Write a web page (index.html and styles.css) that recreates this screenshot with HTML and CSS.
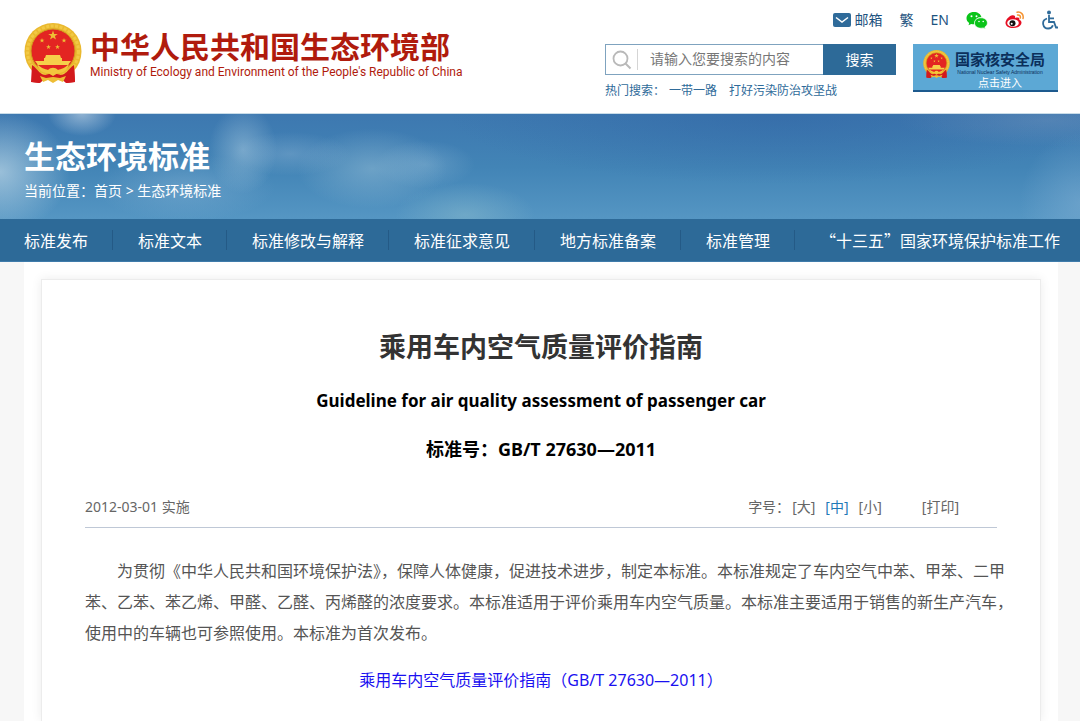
FILE: index.html
```html
<!DOCTYPE html>
<html lang="zh-CN">
<head>
<meta charset="utf-8">
<meta name="viewport" content="width=device-width, initial-scale=1">
<title>乘用车内空气质量评价指南</title>
<link rel="stylesheet" href="styles.css">
</head>
<body>
<svg class="sprite" width="0" height="0" aria-hidden="true">
  <defs>
    <path id="star" d="M0-5 1.2-1.6 4.8-1.5 1.9.6 2.9 4 0 2-2.9 4-1.9.6-4.8-1.5-1.2-1.6z"/>
    <symbol id="emblem" viewBox="0 0 58 62">
      <path d="M8 43h42l1 17-9 1-5-5H21l-5 5-8-1z" fill="#d3191c"/>
      <circle cx="29" cy="29.500" r="28.500" fill="#eab92f"/>
      <circle cx="29" cy="29.500" r="25.500" fill="none" stroke="#f2c944" stroke-width="3" stroke-dasharray="3 1.500"/>
      <circle cx="29" cy="29" r="22" fill="#e32522" stroke="#d29c1e"/>
      <g fill="#eebd35">
        <use href="#star" transform="translate(29 13.500)"/>
        <use href="#star" transform="translate(18 18.500) scale(.52)"/>
        <use href="#star" transform="translate(40 18.500) scale(.52)"/>
        <use href="#star" transform="translate(24.500 25) scale(.52)"/>
        <use href="#star" transform="translate(33.500 25) scale(.52)"/>
      </g>
      <path d="M22 33h14l1 3H21zM20 36h18v3H20zM11 39h36l-3 4H14z" fill="#f6cf4a"/>
      <path d="M8 43c5 3 7 9 13 10l8-2 8 2c6-1 8-7 13-10l1 17-8 1-6-4H21l-6 4-8-1z" fill="#d3191c"/>
      <path d="M13 42c4 4 8 5 11 6 3-3 7-3 10 0 3-1 7-2 11-6-2 7-6 9-11 9l-5 3-5-3c-5 0-9-2-11-9z" fill="#f3c63d"/>
      <path d="M16 54l6 2c3 0 4-1 7-1s4 1 7 1l6-2-3 6-5-2-5 3-5-3-5 2z" fill="#eebd35"/>
    </symbol>
  </defs>
</svg>

<header class="header">
  <a class="logo" href="#">
    <svg class="logo-emblem" aria-hidden="true"><use href="#emblem"/></svg>
    <span class="logo-text">
      <span class="logo-name">中华人民共和国生态环境部</span>
      <span class="logo-en">Ministry of Ecology and Environment of the People's Republic of China</span>
    </span>
  </a>
  <div class="tools">
    <div class="links">
      <a class="mail" href="#">
        <svg width="18" height="14" viewBox="0 0 18 14" aria-hidden="true"><rect width="18" height="14" rx="2" fill="#2f6b9a"/><path d="M3 4.500l6 4.500 6-4.500" fill="none" stroke="#fff" stroke-width="1.500"/></svg>
        <span>邮箱</span>
      </a>
      <a href="#">繁</a>
      <a href="#">EN</a>
      <a href="#" aria-label="微信">
        <svg width="22" height="18" viewBox="0 0 22 18"><path d="M8 1C3.600 1 .5 3.700.5 7.200c0 2 1 3.600 2.700 4.700l-.7 2.300 2.700-1.300c1 .3 2 .4 3.100.4C8 9 11 6 15.400 6 14.700 3 11.700 1 8 1z" fill="#0ac419"/><path d="M15 6.800c-3.700 0-6.500 2.300-6.500 5.200s2.800 5.200 6.500 5.200c.8 0 1.500-.1 2.200-.3l2.100 1-.5-1.900c1.600-1 2.600-2.400 2.600-4 0-2.900-2.800-5.200-6.400-5.200z" fill="#0ac419" stroke="#fff" stroke-width=".6"/><g fill="#fff"><circle cx="5.500" cy="5.200" r="1"/><circle cx="10.500" cy="5.200" r="1"/><circle cx="13" cy="10.500" r=".8"/><circle cx="17.200" cy="10.500" r=".8"/></g></svg>
      </a>
      <a href="#" aria-label="微博">
        <svg width="20" height="18" viewBox="0 0 20 18"><path d="M7.500 4.200C4.500 4.500.5 8.500.5 12c0 3 3.300 5 7.500 5 5 0 8.500-2.500 8.500-5.300 0-1.500-1-2.400-2.300-2.900.7-1.600-.4-3.200-4.200-1.900.4-1.600 0-2.900-2.500-2.700z" fill="#e60e22"/><ellipse cx="8" cy="12" rx="5.800" ry="3.800" fill="#fff"/><circle cx="7.500" cy="12.200" r="3" fill="#111"/><circle cx="6.700" cy="12.800" r="1" fill="#fff"/><path d="M12 1.200c4-.8 7 2.500 6 6.300M12.500 4c2-.3 3.300 1 2.800 3" fill="none" stroke="#f59330" stroke-width="1.500" stroke-linecap="round"/></svg>
      </a>
      <a href="#" aria-label="无障碍">
        <svg width="16" height="20" viewBox="0 0 16 20"><circle cx="7" cy="2.600" r="2" fill="#2f6b9a"/><path d="M7 5v7h5l2 5.500h2M7 8.300h5M5 8.500c-3 1-4.200 3.500-3.800 5.800.5 2.700 2.600 4.200 5 4.200 2.300 0 4-1.300 4.700-3.300" fill="none" stroke="#2f6b9a" stroke-width="1.800"/></svg>
      </a>
    </div>
    <div class="search-row">
      <div>
        <form class="search">
          <label class="search-icon" for="q" aria-label="搜索内容"><svg width="20" height="20" viewBox="0 0 20 20"><circle cx="8.500" cy="8.500" r="7" fill="none" stroke="#b9b9b9" stroke-width="1.800"/><path d="M13.500 13.500l5 5" stroke="#b9b9b9" stroke-width="2"/></svg></label>
          <input id="q" type="text" placeholder="请输入您要搜索的内容">
          <button type="button">搜索</button>
        </form>
        <p class="hot">热门搜索：<a href="#">一带一路</a><a href="#">打好污染防治攻坚战</a></p>
      </div>
      <a class="nnsa" href="#">
        <svg class="nnsa-emblem" aria-hidden="true"><use href="#emblem"/></svg>
        <span class="nnsa-text">
          <strong>国家核安全局</strong>
          <small>National Nuclear Safety Administration</small>
          <span>点击进入</span>
        </span>
      </a>
    </div>
  </div>
</header>

<section class="banner">
  <h2>生态环境标准</h2>
  <p>当前位置：<a href="#">首页</a> &gt; <a href="#">生态环境标准</a></p>
</section>

<nav class="nav">
  <a href="#">标准发布</a>
  <a href="#">标准文本</a>
  <a href="#">标准修改与解释</a>
  <a href="#">标准征求意见</a>
  <a href="#">地方标准备案</a>
  <a href="#">标准管理</a>
  <a href="#">“十三五”国家环境保护标准工作</a>
</nav>

<main class="page">
  <article class="card">
    <h1>乘用车内空气质量评价指南</h1>
    <p class="title-en">Guideline for air quality assessment of passenger car</p>
    <p class="number">标准号：GB/T 27630—2011</p>
    <div class="meta">
      <span>2012-03-01 实施</span>
      <div class="sizes">
        <span>字号：</span>
        <button type="button">[大]</button>
        <button type="button" class="active">[中]</button>
        <button type="button">[小]</button>
        <button type="button" class="print">[打印]</button>
      </div>
    </div>
    <p class="text">为贯彻《中华人民共和国环境保护法》，保障人体健康，促进技术进步，制定本标准。本标准规定了车内空气中苯、甲苯、二甲<br>苯、乙苯、苯乙烯、甲醛、乙醛、丙烯醛的浓度要求。本标准适用于评价乘用车内空气质量。本标准主要适用于销售的新生产汽车，<br>使用中的车辆也可参照使用。本标准为首次发布。</p>
    <p class="download"><a href="#">乘用车内空气质量评价指南（GB/T 27630—2011）</a></p>
  </article>
</main>
</body>
</html>
```
FILE: styles.css
```css
* {
  box-sizing: border-box;
}

body {
  margin: 0;
  background: #f7f7f7;
  color: #555;
  font-family: "Noto Sans", "Noto Sans CJK SC", sans-serif;
  font-size: 14px;
  line-height: 20px;
}

h1, h2, p {
  margin: 0;
}

a {
  color: inherit;
  text-decoration: none;
}

button {
  padding: 0;
  border: 0;
  background: none;
  color: inherit;
  font: inherit;
}

svg {
  display: block;
}

.sprite {
  position: absolute;
}

.header {
  display: flex;
  justify-content: space-between;
  align-items: flex-start;
  padding: 10px 22px 12px 24px;
  border-bottom: 1px solid #c9dce8;
  background: #fff;
}

.logo {
  display: flex;
  gap: 8px;
  padding-top: 12px;
  color: #b01b0d;
}

.logo-emblem {
  width: 58px;
  height: 62px;
}

.logo-text {
  display: flex;
  flex-direction: column;
  padding-top: 7px;
  white-space: nowrap;
}

.logo-name {
  font-size: 30px;
  font-weight: 700;
  line-height: 36px;
}

.logo-en {
  font-family: Roboto, "Liberation Sans", Arial, sans-serif;
  font-size: 12px;
  line-height: 14px;
}

.links {
  display: flex;
  justify-content: flex-end;
  align-items: center;
  gap: 17px;
  color: #1d5380;
}

.mail {
  display: flex;
  align-items: center;
  gap: 4px;
}

.search-row {
  display: flex;
  gap: 17px;
  padding-top: 14px;
}

.search {
  display: flex;
  width: 291px;
  height: 31px;
  border: 1px solid #7fa3bf;
  background: #fff;
}

.search-icon {
  display: flex;
  align-items: center;
  width: 32px;
  margin: 4px 0;
  padding-left: 6px;
  border-right: 1px solid #d5d5d5;
}

.search input {
  flex: 1;
  min-width: 0;
  padding: 0 12px 2px;
  border: 0;
  background: none;
  color: #555;
  font: inherit;
}

.search input::placeholder {
  color: #777;
}

.search button {
  width: 73px;
  margin: -1px;
  background: #2d6a98;
  color: #fff;
}

.hot {
  display: flex;
  gap: 12px;
  padding-top: 6px;
  color: #2f6b9a;
  font-size: 12px;
}

.hot a:first-child {
  margin-left: -8px;
}

.nnsa {
  display: flex;
  gap: 5px;
  width: 145px;
  height: 48px;
  padding: 5px 0 0 10px;
  border-bottom: 2px solid #1d5a8e;
  background: #5ca8d5;
  color: #fff;
}

.nnsa-emblem {
  flex: none;
  width: 27px;
  height: 30px;
}

.nnsa-text {
  display: flex;
  flex-direction: column;
  align-items: center;
  font-size: 11px;
  line-height: 16px;
  white-space: nowrap;
}

.nnsa strong {
  color: #0b2f5b;
  font-size: 15px;
  line-height: 20px;
}

.nnsa small {
  color: #0b2f5b;
  font-family: "Liberation Sans", Arial, sans-serif;
  font-size: 5px;
  line-height: 6px;
}

.banner {
  padding: 21px 24px 18px;
  background:
    radial-gradient(ellipse 70px 60px at 0 55%, rgba(200, 222, 235, .65), transparent),
    radial-gradient(ellipse 34px 22px at 82px 0, rgba(195, 215, 232, .6), transparent),
    radial-gradient(ellipse 34px 44px at 243px 34%, rgba(160, 196, 220, .55), transparent),
    radial-gradient(ellipse 60px 22px at 290px 38%, rgba(150, 186, 216, .35), transparent),
    radial-gradient(ellipse 75px 40px at 372px 52%, rgba(150, 190, 214, .5), transparent),
    radial-gradient(ellipse 50px 24px at 425px 48%, rgba(150, 190, 218, .35), transparent),
    radial-gradient(ellipse 70px 32px at 465px 96%, rgba(150, 196, 208, .4), transparent),
    radial-gradient(ellipse 90px 34px at 185px 70%, rgba(140, 184, 216, .4), transparent),
    radial-gradient(ellipse 60px 70px at 100% 85%, rgba(130, 176, 212, .5), transparent),
    radial-gradient(ellipse 150px 26px at 97% 6%, rgba(116, 148, 188, .4), transparent),
    radial-gradient(ellipse 330px 70px at 72% 0, rgba(48, 100, 164, .5), transparent),
    linear-gradient(#3d78b0, #4284b6 50%, #5596c3);
  color: #fff;
}

.banner h2 {
  font-size: 31px;
  line-height: 42px;
}

.banner p {
  padding-top: 4px;
}

.nav {
  display: flex;
  padding: 11px 0 11px 24px;
  border-bottom: 1px solid #3f7cab;
  background: #2d6a98;
  color: #fff;
  font-family: "Noto Sans CJK SC", sans-serif;
  font-size: 16px;
  white-space: nowrap;
}

.nav a {
  padding-right: 24px;
  border-right: 1px solid #245a86;
}

.nav a + a {
  padding-left: 25px;
}

.nav a:last-child {
  padding-right: 0;
  border-right: 0;
}

.page {
  margin: 0 22px 0 24px;
  padding: 17px 17px 0;
  background: #fff;
}

.card {
  min-height: 442px;
  padding: 47px 43px 29px;
  border: 1px solid #ececec;
  border-bottom: 0;
  box-shadow: 0 0 10px rgba(0, 0, 0, .08);
}

.card h1 {
  color: #333;
  font-size: 27px;
  line-height: 40px;
  text-align: center;
}

.title-en,
.number {
  color: #000;
  font-weight: 700;
  line-height: 24px;
  text-align: center;
}

.title-en {
  padding-top: 22px;
  font-size: 17px;
}

.number {
  padding-top: 24px;
  font-size: 18px;
}

.meta {
  display: flex;
  justify-content: space-between;
  padding: 36px 0 10px;
  border-bottom: 1px solid #bfc8d6;
  color: #666;
}

.sizes {
  display: flex;
  gap: 10px;
  padding-right: 38px;
}

.sizes span {
  margin-right: -8px;
}

.sizes .active {
  color: #1f7ab8;
}

.sizes .print {
  margin-left: 30px;
}

.text {
  padding-top: 28px;
  font-size: 16px;
  line-height: 31px;
  text-indent: 2em;
  white-space: nowrap;
}

.download {
  padding-top: 21px;
  color: #1a10f0;
  font-size: 16px;
  text-align: center;
}
```
